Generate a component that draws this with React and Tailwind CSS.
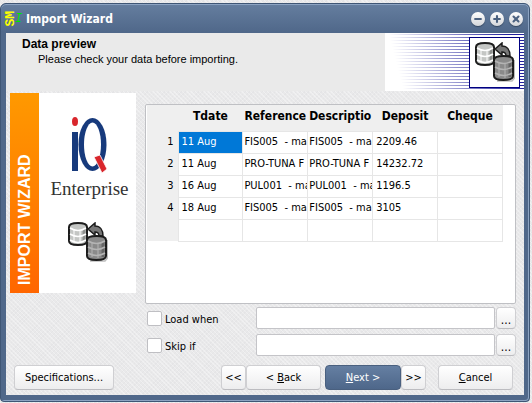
import { Minus, Plus, X } from 'lucide-react'

const columns = ['Tdate', 'Reference', 'Descriptio', 'Deposit', 'Cheque']

const rows = [
  ['11 Aug', 'FIS005  - ma', 'FIS005  - ma', '2209.46', ''],
  ['11 Aug', 'PRO-TUNA F', 'PRO-TUNA F', '14232.72', ''],
  ['16 Aug', 'PUL001  - ma', 'PUL001  - ma', '1196.5', ''],
  ['18 Aug', 'FIS005  - ma', 'FIS005  - ma', '3105', ''],
  ['', '', '', '', ''],
]

const texture = 'bg-[#e9e9ea] bg-[repeating-linear-gradient(45deg,#ffffff55_0_1px,transparent_1px_3px),repeating-linear-gradient(-45deg,#d8d8dc44_0_1px,transparent_1px_3px)]'

function Cylinder({ x, y, w, h, fill, light, dark }) {
  const r = 4
  const body = `M${x} ${y + r} Q${x} ${y} ${x + w / 2} ${y} Q${x + w} ${y} ${x + w} ${y + r} V${y + h - r} Q${x + w} ${y + h} ${x + w / 2} ${y + h} Q${x} ${y + h} ${x} ${y + h - r} Z`
  const ring = (cy) => `M${x + 1} ${cy} Q${x + w / 2} ${cy + 5} ${x + w - 1} ${cy}`
  return (
    <g fill="none">
      <path d={body} fill={fill} stroke="#1c1c1c" strokeWidth="2" />
      <path d={`M${x + w - 3} ${y + 6} V${y + h - 3}`} stroke={dark} strokeWidth="3" />
      <path d={`M${x + 5} ${y + 6} V${y + h - 3} M${x + 11} ${y + 8} V${y + h - 2}`} stroke={light} strokeWidth="1" />
      <path d={ring(y + 5)} stroke={light} strokeWidth="1.5" />
      <path d={ring(y + 11)} stroke={light} strokeWidth="1.5" />
      <path d={ring(y + 17)} stroke={light} strokeWidth="1.5" />
    </g>
  )
}

function DatabaseCopy() {
  return (
    <svg viewBox="0 0 40 40" className="h-10 w-10 shrink-0" aria-hidden="true">
      <path d="M22 39 H37 L39.5 36 V18" fill="none" stroke="#bdbdbd" strokeWidth="1.5" />
      <Cylinder x={1} y={1} w={18} h={22} fill="#c4c6c4" light="#ffffff" dark="#8e908e" />
      <path d="M20 7 L27 1 V4 C32 4 35 8 35 14 H31 C31 11 30 10 27 10 V13 Z" fill="#777777" stroke="#1c1c1c" strokeWidth="1.5" />
      <Cylinder x={19} y={14} w={19} h={24} fill="#8a8a8a" light="#b4b4b4" dark="#666666" />
    </svg>
  )
}

function IqMark() {
  return (
    <svg viewBox="-2 0 40 58" className="h-[58px] w-10" role="img" aria-label="iQ">
      <rect x="2" y="17" width="6" height="39" fill="#173a7c" />
      <ellipse cx="5" cy="6.5" rx="3" ry="4.5" fill="#d9262c" />
      <ellipse cx="22.5" cy="29.5" rx="14" ry="26.5" fill="#173a7c" />
      <ellipse cx="22.5" cy="29.5" rx="8.5" ry="22" fill="#ffffff" />
      <path d="M24 42 L30 40 L37 54 L32 58 Z" fill="#d9262c" stroke="#ffffff" strokeWidth="0.8" />
    </svg>
  )
}

function CaptionButton({ label, icon: Icon }) {
  return (
    <button aria-label={label} className="flex h-[14px] w-[14px] items-center justify-center rounded-full bg-linear-to-b from-white to-[#d4d6da] text-[#4b6180] shadow-[0_1px_1px_#34465f]">
      <Icon size={10} strokeWidth={5} />
    </button>
  )
}

function PushButton({ className, children, ...props }) {
  return (
    <button {...props} className={`h-[25px] shrink-0 rounded border whitespace-nowrap ${className}`}>
      {children}
    </button>
  )
}

const plain = 'border-[#cfcfd2] border-b-[#bcbcc0] bg-linear-to-b from-white to-[#ededee]'

function Condition({ id, label }) {
  return (
    <div className="flex items-center">
      <input id={id} type="checkbox" className="ml-0.5 h-[15px] w-[15px] shrink-0 appearance-none rounded-xs border border-[#bfbfc3] bg-white" />
      <label htmlFor={id} className="w-[94px] shrink-0 pt-1 pl-[3px]">{label}</label>
      <input aria-label={`${label} expression`} className="h-[22px] min-w-0 flex-1 rounded-xs border border-[#c4c4c8] bg-white px-1 outline-none" />
      <button aria-label={`Edit ${label}`} className={`ml-px h-[22px] w-5 shrink-0 rounded border pt-1 text-[12px] ${plain}`}>...</button>
    </div>
  )
}

function PreviewTable() {
  return (
    <div className="h-[200px] overflow-hidden rounded-xs border border-[#bfc0c4] bg-white pl-px">
      <div className="mr-3">
        <table className="w-full table-fixed border-collapse bg-white">
          <thead>
            <tr className="h-[26px] bg-[#efefef]">
              <th className="w-[31px]" aria-label="Row" />
              {columns.map((c) => (
                <th key={c} className="p-0 pb-1 text-[12px] leading-4 font-bold whitespace-nowrap">{c}</th>
              ))}
            </tr>
          </thead>
          <tbody>
            {rows.map((row, i) => (
              <tr key={i} className="h-[22px]">
                <th className="bg-[#efefef] p-0 pr-1 text-right font-normal">{i < 4 ? i + 1 : ''}</th>
                {row.map((cell, j) => (
                  <td
                    key={j}
                    className={`overflow-hidden border border-[#e6e6e6] p-0 whitespace-pre ${j === 0 || j === 3 ? 'pl-[3px]' : 'pl-px'} ${i === 0 && j === 0 ? 'bg-[#0078d7] text-white' : ''}`}
                  >
                    {cell}
                  </td>
                ))}
              </tr>
            ))}
          </tbody>
        </table>
      </div>
    </div>
  )
}

export default function App() {
  return (
    <div className={`pt-[3px] pr-0.5 pb-px font-['DejaVu_Sans_Condensed','Noto_Sans',sans-serif] text-[11px] leading-4 text-black ${texture}`}>
      <div className="rounded-t-md rounded-b border border-[#3f5675] bg-[#50688a] bg-[linear-gradient(#657e9f,#50688a_28px)] px-[5px] pb-1.5 shadow-[inset_0_1px_0_#8ca3c2,inset_-1px_-1px_0_#8ca3c2]">
        <div className="flex h-[29px] items-center">
          <span className="flex h-[18px] w-[15px] items-center font-['Liberation_Mono',monospace] text-[13px] font-bold text-[#ffff00]">
            <span className="rotate-180 leading-[9px] [writing-mode:vertical-rl]">SM</span>
            <span className="text-[12px] leading-3 font-normal text-[#00e800] italic">I</span>
          </span>
          <h1 className="ml-[5px] flex-1 text-[12px] font-bold text-white">Import Wizard</h1>
          <div className="mr-px flex gap-[5px]">
            <CaptionButton label="Minimize" icon={Minus} />
            <CaptionButton label="Maximize" icon={Plus} />
            <CaptionButton label="Close" icon={X} />
          </div>
        </div>

        <main className={texture}>
          <header className="flex h-[58px] bg-[#eaeaea] font-['Liberation_Sans',sans-serif] text-[12px] leading-[15px]">
            <div className="flex-1 pt-1 pl-4">
              <h2 className="font-bold">Data preview</h2>
              <p className="pl-4 text-[11px]">Please check your data before importing.</p>
            </div>
            <div className="flex w-[139px] items-center justify-end bg-white bg-[linear-gradient(75deg,#ffffff_12%,transparent_90%),repeating-linear-gradient(#ffffff_0_1px,#20209c_1px_2px,#ffffff_2px_3px)] pr-1">
              <div className="flex h-[51px] w-[51px] items-center justify-center border border-[#000080] bg-white">
                <DatabaseCopy />
              </div>
            </div>
          </header>

          <div className="flex pt-0.5 pr-2 pl-1">
            <aside className="flex h-[200px] w-[126px] shrink-0 bg-white">
              <div className="flex w-[29px] bg-linear-to-b from-[#ff9900] to-[#ff6600]">
                <span className="h-full w-full rotate-180 pt-2 font-['Liberation_Sans',sans-serif] text-[16px] leading-[29px] font-bold text-white [writing-mode:vertical-rl]">IMPORT WIZARD</span>
              </div>
              <div className="flex flex-1 flex-col items-center pt-[22px]">
                <IqMark />
                <span className="pl-1 font-['Liberation_Serif',serif] text-[19px] leading-8 text-[#333333]">Enterprise</span>
                <div className="pt-[17px]"><DatabaseCopy /></div>
              </div>
            </aside>
            <section className="ml-[9px] min-w-0 flex-1 pt-[11px]">
              <PreviewTable />
              <div className="mt-[3px] flex flex-col gap-[5px]">
                <Condition id="load" label="Load when" />
                <Condition id="skip" label="Skip if" />
              </div>
            </section>
          </div>

          <footer className="flex pt-[9px] pr-[11px] pb-[5px] pl-2">
            <PushButton className={`w-[100px] ${plain}`}>Specifications...</PushButton>
            <div className="ml-auto flex">
              <PushButton className={`w-[25px] ${plain}`} aria-label="First">&lt;&lt;</PushButton>
              <PushButton className={`w-[75px] ${plain}`}>&lt; <u>B</u>ack</PushButton>
              <PushButton className="ml-1 w-[76px] border-[#4a607f] bg-linear-to-b from-[#657fa2] to-[#4e678a] text-white"><u>N</u>ext &gt;</PushButton>
              <PushButton className={`w-[25px] ${plain}`} aria-label="Last">&gt;&gt;</PushButton>
              <PushButton className={`ml-3 w-[75px] ${plain}`}><u>C</u>ancel</PushButton>
            </div>
          </footer>
        </main>
      </div>
    </div>
  )
}
